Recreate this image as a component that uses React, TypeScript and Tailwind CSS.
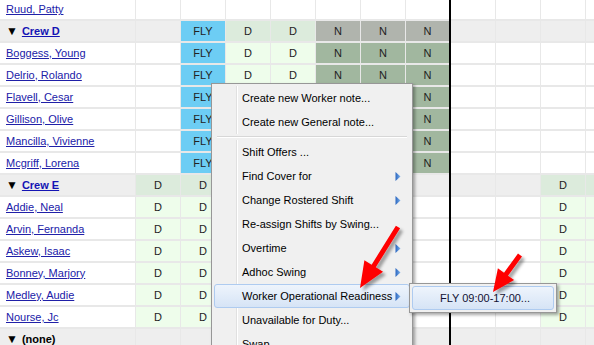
import React from 'react';

type K = 'w' | 'g' | 'fly' | 'dh' | 'd' | 'nh' | 'n';

const cellBg: Record<K, string> = {
  w: 'bg-white',
  g: 'bg-[#eeeeee]',
  fly: 'bg-[#6dcdf4]',
  dh: 'bg-[#dcebdc]',
  d: 'bg-[#eefdeb]',
  nh: 'bg-[#b0b4ad]',
  n: 'bg-[#a1b79f]',
};

const cellText: Record<K, string> = { w: '', g: '', fly: 'FLY', dh: 'D', d: 'D', nh: 'N', n: 'N' };

type RowDef = { name: string; group?: boolean; plain?: boolean; cells: K[] };

const crewDMember: K[] = ['w', 'fly', 'd', 'd', 'n', 'n', 'n', 'w', 'w', 'w', 'w'];
const crewEMember: K[] = ['d', 'd', 'w', 'w', 'w', 'w', 'w', 'w', 'w', 'd', 'd'];

const rows: RowDef[] = [
  { name: 'Ruud, Patty', cells: ['w', 'w', 'w', 'w', 'w', 'w', 'w', 'w', 'w', 'w', 'w'] },
  { name: 'Crew D', group: true, cells: ['g', 'fly', 'dh', 'dh', 'nh', 'nh', 'nh', 'g', 'g', 'g', 'g'] },
  ...['Boggess, Young', 'Delrio, Rolando', 'Flavell, Cesar', 'Gillison, Olive', 'Mancilla, Vivienne', 'Mcgriff, Lorena'].map(
    (name) => ({ name, cells: crewDMember })
  ),
  { name: 'Crew E', group: true, cells: ['dh', 'dh', 'g', 'g', 'g', 'g', 'g', 'g', 'g', 'dh', 'dh'] },
  ...['Addie, Neal', 'Arvin, Fernanda', 'Askew, Isaac', 'Bonney, Marjory', 'Medley, Audie', 'Nourse, Jc'].map((name) => ({
    name,
    cells: crewEMember,
  })),
  { name: '(none)', group: true, plain: true, cells: ['g', 'g', 'g', 'g', 'g', 'g', 'g', 'g', 'g', 'g', 'g'] },
];

const menuItems: { label: string; sub?: boolean; active?: boolean; sep?: boolean }[] = [
  { label: 'Create new Worker note...' },
  { label: 'Create new General note...' },
  { label: '', sep: true },
  { label: 'Shift Offers ...' },
  { label: 'Find Cover for', sub: true },
  { label: 'Change Rostered Shift', sub: true },
  { label: 'Re-assign Shifts by Swing...' },
  { label: 'Overtime', sub: true },
  { label: 'Adhoc Swing', sub: true },
  { label: 'Worker Operational Readiness', sub: true, active: true },
  { label: 'Unavailable for Duty...' },
  { label: 'Swap' },
];

const SubArrow = () => (
  <svg width="6" height="9" viewBox="0 0 6 9">
    <defs>
      <linearGradient id="ar" x1="0" y1="0" x2="1" y2="0">
        <stop offset="0" stopColor="#2a66c0" />
        <stop offset="1" stopColor="#7fb2ea" />
      </linearGradient>
    </defs>
    <polygon points="0.5,0 5.5,4.5 0.5,9" fill="url(#ar)" />
  </svg>
);

const GridRow = ({ row, first }: { row: RowDef; first: boolean }) => (
  <div className={`flex shrink-0 ${first ? 'h-[21px]' : 'h-[22px]'}`}>
    <div
      className={`w-[136px] shrink-0 h-full border-r border-b-2 border-[#e8e8e8] pl-[6px] flex items-center ${
        row.group ? 'bg-[#eeeeee]' : 'bg-white'
      }`}
    >
      {row.group ? (
        <span className="flex items-center font-bold">
          <span className="text-[12px] leading-none text-black mr-[4px]">▼</span>
          <span className={row.plain ? 'text-black' : 'text-[#1414b4] underline'}>{row.name}</span>
        </span>
      ) : (
        <span className="text-[#2020a8] underline">{row.name}</span>
      )}
    </div>
    {row.cells.map((k, i) => (
      <React.Fragment key={i}>
        <div
          className={`shrink-0 h-full border-b-2 border-[#e8e8e8] flex items-center justify-center text-[#222] ${cellBg[k]} ${
            i === 6 ? 'w-[43px]' : 'w-[45px] border-r'
          }`}
        >
          {cellText[k]}
        </div>
        {i === 6 && <div className="w-[2px] shrink-0 h-full bg-black" />}
      </React.Fragment>
    ))}
  </div>
);

export default function App() {
  return (
    <div className="relative w-[594px] h-[345px] overflow-hidden bg-white font-['Liberation_Sans',Arial,sans-serif] text-[11px]">
      <div className="flex flex-col">
        {rows.map((row, i) => (
          <GridRow key={i} row={row} first={i === 0} />
        ))}
      </div>

      {/* context menu */}
      <div className="absolute left-[211px] top-[83px] w-[202px] border border-[#979797] bg-[#f0f0f0] p-[2px] shadow-[2px_2px_3px_rgba(0,0,0,0.35)] text-black">
        {menuItems.map((m, i) =>
          m.sep ? (
            <div key={i} className="flex h-[6px]">
              <div className="flex-1 flex flex-col justify-center mx-[3px]">
                <div className="h-px bg-[#d7d7d7]" />
                <div className="h-px bg-white" />
              </div>
            </div>
          ) : (
            <div
              key={i}
              className={`flex items-center h-[24px] border rounded-[3px] ${
                m.active ? 'border-[#aecbf0] bg-gradient-to-b from-[#eef4fc] to-[#d6e4f6]' : 'border-transparent'
              }`}
            >
              <div
                className={`w-[22px] h-[24px] shrink-0 ${
                  m.active ? '' : 'border-r border-[#e0e0e0] shadow-[1px_0_0_#ffffff]'
                }`}
              />
              <div className="flex-1 pl-[5px] whitespace-nowrap">{m.label}</div>
              {m.sub && (
                <div className="w-[6px] mr-[8px] flex items-center">
                  <SubArrow />
                </div>
              )}
            </div>
          )
        )}
      </div>

      {/* submenu */}
      <div className="absolute left-[409px] top-[283px] w-[148px] h-[30px] border border-[#979797] bg-[#f0f0f0] p-[2px] shadow-[2px_2px_3px_rgba(0,0,0,0.35)]">
        <div className="h-full flex items-center justify-center border border-[#aecbf0] rounded-[3px] bg-gradient-to-b from-[#eef4fc] to-[#d6e4f6] text-[#111133] pl-[4px]">
          FLY 09:00-17:00...
        </div>
      </div>

      {/* annotation arrows */}
      <svg className="absolute left-0 top-0 pointer-events-none" width="594" height="345">
        <defs>
          <filter id="sh" x="-20%" y="-20%" width="160%" height="160%">
            <feDropShadow dx="3" dy="3" stdDeviation="1.5" floodColor="#000" floodOpacity="0.35" />
          </filter>
        </defs>
        <polygon
          points="400.1,228.3 375.8,267.3 383,271.8 360,288 364.4,260.2 371.6,264.7 395.9,225.7"
          fill="#ff0000"
          filter="url(#sh)"
        />
        <polygon
          points="522,256.5 508,275.7 514.1,280.1 493,292 497.9,268.3 504,272.7 518,253.5"
          fill="#ff0000"
          filter="url(#sh)"
        />
      </svg>
    </div>
  );
}
